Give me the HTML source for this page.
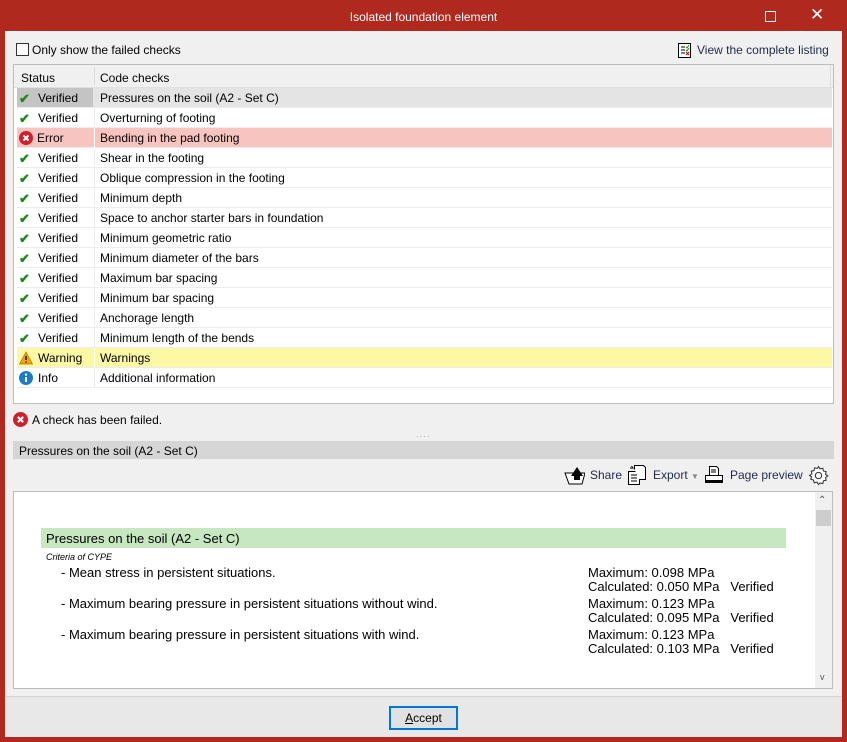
<!DOCTYPE html>
<html><head><meta charset="utf-8"><style>
*{box-sizing:border-box;margin:0;padding:0}
body{width:847px;height:742px;background:#b0291f;font-family:"Liberation Sans",sans-serif;font-size:12px;color:#000;position:relative;overflow:hidden}
.a{position:absolute}
.title{left:0;top:0;width:847px;height:31px;color:#fff;text-align:center;line-height:34px;font-size:12px}
.client{left:5px;top:31px;width:837px;height:706px;background:#f0f0f0}
.foot{left:5px;top:696px;width:837px;height:41px;background:#e8e8e8;border-top:1px solid #d4d4d4}
.tbl{left:13px;top:64px;width:821px;height:340px;background:#fff;border:1px solid #bdbdbd}
.row{position:absolute;left:3px;width:815px;height:20px;border-bottom:1px solid #ececec;line-height:21px}
.row .s{position:absolute;left:21px}
.row .c{position:absolute;left:83px}
.row .d{position:absolute;left:77px;top:0;width:1px;height:20px;background:#ececec}
.ic{position:absolute;left:2px;top:3px;width:14px;height:14px}
.chk{color:#1a8a1a;font-weight:bold;position:absolute;left:2px;top:0;font-size:13px}
.rep{left:13px;top:491px;width:820px;height:198px;background:#fff;border:1px solid #bdbdbd}
.r{position:absolute;font-size:13px;line-height:14px}
</style></head><body>
<div class="a title">Isolated foundation element</div>
<div class="a" style="left:765px;top:11px;width:11px;height:11px;border:1px solid #fff"></div>
<div class="a" style="left:810px;top:5px;color:#fff;font-size:17px">✕</div>
<div class="a client"></div>
<div class="a foot"></div>
<div class="a" style="left:16px;top:43px;width:13px;height:13px;border:1px solid #333;background:#fff"></div>
<div class="a" style="left:32px;top:43px">Only show the failed checks</div>
<svg class="a" style="left:678px;top:43px" width="13" height="15"><rect x=".5" y=".5" width="12" height="14" fill="#fff" stroke="#000"/><path d="M3 4h4M3 7h4M3 10h4" stroke="#000"/><path d="M8 4l1 1 2-3M8 7l1 1 2-3" stroke="#1a8a1a" fill="none"/><path d="M8 9l3 3M11 9l-3 3" stroke="#d00"/></svg>
<div class="a" style="left:697px;top:43px;color:#1f2a4a">View the complete listing</div>
<div class="a tbl">
<div class="a" style="left:0;top:0;width:819px;height:23px;background:#f0f0f0;border-bottom:1px solid #e0e0e0"></div>
<div class="a" style="left:7px;top:6px">Status</div>
<div class="a" style="left:80px;top:2px;width:1px;height:18px;background:#ddd"></div>
<div class="a" style="left:86px;top:6px">Code checks</div>
<div class="a" style="left:816px;top:0;width:1px;height:23px;background:#ddd"></div>
<div class="row" style="top:23px;background:#e4e4e4"><div class="a" style="left:0;top:0;width:76px;height:19px;background:#c4c4c4"></div><span class="chk">✔</span><span class="s">Verified</span><span class="c">Pressures on the soil (A2 - Set C)</span></div>
<div class="row" style="top:43px"><span class="chk">✔</span><span class="s">Verified</span><div class="d"></div><span class="c">Overturning of footing</span></div>
<div class="row" style="top:63px;background:#f8c4c0"><svg class="ic" viewBox="0 0 14 14"><circle cx="7" cy="7" r="7" fill="#d0202c"/><path d="M4.5 4.5l5 5M9.5 4.5l-5 5" stroke="#fff" stroke-width="2"/></svg><span class="s" style="left:20px">Error</span><div class="d" style="background:#fff"></div><span class="c">Bending in the pad footing</span></div>
<div class="row" style="top:83px"><span class="chk">✔</span><span class="s">Verified</span><div class="d"></div><span class="c">Shear in the footing</span></div>
<div class="row" style="top:103px"><span class="chk">✔</span><span class="s">Verified</span><div class="d"></div><span class="c">Oblique compression in the footing</span></div>
<div class="row" style="top:123px"><span class="chk">✔</span><span class="s">Verified</span><div class="d"></div><span class="c">Minimum depth</span></div>
<div class="row" style="top:143px"><span class="chk">✔</span><span class="s">Verified</span><div class="d"></div><span class="c">Space to anchor starter bars in foundation</span></div>
<div class="row" style="top:163px"><span class="chk">✔</span><span class="s">Verified</span><div class="d"></div><span class="c">Minimum geometric ratio</span></div>
<div class="row" style="top:183px"><span class="chk">✔</span><span class="s">Verified</span><div class="d"></div><span class="c">Minimum diameter of the bars</span></div>
<div class="row" style="top:203px"><span class="chk">✔</span><span class="s">Verified</span><div class="d"></div><span class="c">Maximum bar spacing</span></div>
<div class="row" style="top:223px"><span class="chk">✔</span><span class="s">Verified</span><div class="d"></div><span class="c">Minimum bar spacing</span></div>
<div class="row" style="top:243px"><span class="chk">✔</span><span class="s">Verified</span><div class="d"></div><span class="c">Anchorage length</span></div>
<div class="row" style="top:263px"><span class="chk">✔</span><span class="s">Verified</span><div class="d"></div><span class="c">Minimum length of the bends</span></div>
<div class="row" style="top:283px;background:#fcf8a4"><svg class="ic" viewBox="0 0 14 14" style="left:1px;width:16px"><path d="M7 1L13.5 13H.5z" fill="#f5a500" stroke="#b07000" stroke-width=".7"/><path d="M7 5v4M7 10.5v1.2" stroke="#000" stroke-width="1.4"/></svg><span class="s">Warning</span><div class="d" style="background:#fff"></div><span class="c">Warnings</span></div>
<div class="row" style="top:303px"><svg class="ic" viewBox="0 0 14 14"><circle cx="7" cy="7" r="7" fill="#1a7cc8"/><path d="M7 6v5" stroke="#fff" stroke-width="2"/><circle cx="7" cy="3.6" r="1.2" fill="#fff"/></svg><span class="s">Info</span><div class="d"></div><span class="c">Additional information</span></div>
</div>
<svg class="a" style="left:13px;top:412px" width="15" height="15" viewBox="0 0 14 14"><circle cx="7" cy="7" r="7" fill="#d0202c"/><path d="M4.5 4.5l5 5M9.5 4.5l-5 5" stroke="#fff" stroke-width="2"/></svg>
<div class="a" style="left:32px;top:413px">A check has been failed.</div>
<div class="a" style="left:416px;top:432px;color:#999;font-size:8px;letter-spacing:1px">····</div>
<div class="a" style="left:13px;top:441px;width:821px;height:18px;background:#d6d6d6;padding:3px 6px">Pressures on the soil (A2 - Set C)</div>
<svg class="a" style="left:563px;top:464px" width="22" height="22"><path d="M2 9l4 11h13l3-11z" fill="#fff" stroke="#000"/><path d="M8 12l6-9 6 9h-3v4h-6v-4z" fill="#000"/></svg>
<div class="a" style="left:590px;top:468px;color:#1f2a4a">Share</div>
<svg class="a" style="left:627px;top:464px" width="20" height="22"><rect x="1.5" y="7.5" width="11" height="13" fill="#fff" stroke="#000"/><path d="M4 11h6M4 14h6M4 17h6" stroke="#000"/><path d="M7.5 5.5v-4h9l2 2v12h-6" fill="#fff" stroke="#000"/><path d="M3 4h3l-1.5-2" stroke="#000" fill="none"/></svg>
<div class="a" style="left:653px;top:468px;color:#1f2a4a">Export <span style="color:#888;font-size:8px">▼</span></div>
<svg class="a" style="left:704px;top:465px" width="20" height="20"><path d="M5.5 1.5h7l2 2v7h-9z" fill="#fff" stroke="#000"/><path d="M7 5h5M7 7h5" stroke="#000"/><rect x="1.5" y="10.5" width="17" height="7" fill="#fff" stroke="#000"/><rect x="2" y="15" width="16" height="3" fill="#000"/></svg>
<div class="a" style="left:730px;top:468px;color:#1f2a4a">Page preview</div>
<svg class="a" style="left:808px;top:465px" width="21" height="21" viewBox="0 0 20 20"><path d="M10 1.5l1.5 2.2 2.6-.6.6 2.6 2.6.6-.6 2.6 2.2 1.5-2.2 1.5.6 2.6-2.6.6-.6 2.6-2.6-.6L10 18.5l-1.5-2.2-2.6.6-.6-2.6-2.6-.6.6-2.6L1.5 10l2.2-1.5-.6-2.6 2.6-.6.6-2.6 2.6.6z" fill="#fff" stroke="#333"/><circle cx="10" cy="10" r="3" fill="#fff" stroke="#333"/></svg>
<div class="a rep">
<div class="a" style="left:801px;top:0;width:17px;height:196px;background:#f0f0f0"></div>
<div class="a" style="left:804px;top:3px;font-size:10px;color:#555">⌃</div>
<div class="a" style="left:802px;top:18px;width:15px;height:16px;background:#cdcdcd"></div>
<div class="a" style="left:806px;top:180px;font-size:9px;color:#555">v</div>
<div class="a" style="left:27px;top:36px;width:745px;height:20px;background:#c6e7c0"></div>
<div class="r" style="left:32px;top:40px">Pressures on the soil (A2 - Set C)</div>
<div class="r" style="left:32px;top:58px;font-size:9px;font-style:italic">Criteria of CYPE</div>
<div class="r" style="left:47px;top:74px">- Mean stress in persistent situations.</div>
<div class="r" style="left:47px;top:105px">- Maximum bearing pressure in persistent situations without wind.</div>
<div class="r" style="left:47px;top:136px">- Maximum bearing pressure in persistent situations with wind.</div>
<div class="r" style="left:574px;top:74px">Maximum: 0.098 MPa<br>Calculated: 0.050 MPa&nbsp;&nbsp;&nbsp;Verified</div>
<div class="r" style="left:574px;top:105px">Maximum: 0.123 MPa<br>Calculated: 0.095 MPa&nbsp;&nbsp;&nbsp;Verified</div>
<div class="r" style="left:574px;top:136px">Maximum: 0.123 MPa<br>Calculated: 0.103 MPa&nbsp;&nbsp;&nbsp;Verified</div>
</div>
<div class="a" style="left:389px;top:706px;width:69px;height:24px;border:2px solid #0078d7;background:#e1e1e1;text-align:center;line-height:20px"><u>A</u>ccept</div>
</body></html>
